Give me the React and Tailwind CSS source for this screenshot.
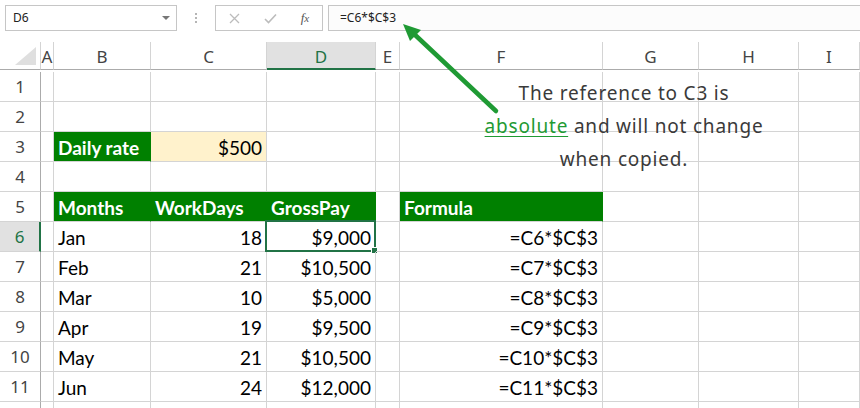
import React from 'react'

const COLS = ['A', 'B', 'C', 'D', 'E', 'F', 'G', 'H', 'I']

// one entry per row: cells keyed by column letter
const ROWS = [
  {},
  {},
  {
    B: { text: 'Daily rate', fill: 'green', bold: true },
    C: { text: '$500', fill: 'orange', right: true },
  },
  {},
  {
    B: { text: 'Months', fill: 'green', bold: true },
    C: { text: 'WorkDays', fill: 'green', bold: true },
    D: { text: 'GrossPay', fill: 'green', bold: true },
    F: { text: 'Formula', fill: 'green', bold: true },
  },
  { B: { text: 'Jan' }, C: { text: '18', right: true }, D: { text: '$9,000', right: true, selected: true }, F: { text: '=C6*$C$3', right: true } },
  { B: { text: 'Feb' }, C: { text: '21', right: true }, D: { text: '$10,500', right: true }, F: { text: '=C7*$C$3', right: true } },
  { B: { text: 'Mar' }, C: { text: '10', right: true }, D: { text: '$5,000', right: true }, F: { text: '=C8*$C$3', right: true } },
  { B: { text: 'Apr' }, C: { text: '19', right: true }, D: { text: '$9,500', right: true }, F: { text: '=C9*$C$3', right: true } },
  { B: { text: 'May' }, C: { text: '21', right: true }, D: { text: '$10,500', right: true }, F: { text: '=C10*$C$3', right: true } },
  { B: { text: 'Jun' }, C: { text: '24', right: true }, D: { text: '$12,000', right: true }, F: { text: '=C11*$C$3', right: true } },
  {},
]

function Cell({ cell }) {
  const c = cell || {}
  let cls = 'relative h-[30px] border-r border-b border-[#d4d4d4] px-[4px] pt-[2px] leading-[28px] whitespace-nowrap overflow-visible'
  if (c.fill === 'green') cls += ' bg-[#008000] border-r-[#008000] text-white'
  else if (c.fill === 'orange') cls += ' bg-[#fff2cc] text-black'
  else cls += ' text-black'
  if (c.bold) cls += ' font-bold'
  if (c.right) cls += ' text-right'
  return (
    <div className={cls}>
      {c.text}
      {c.selected && (
        <div className="absolute -left-[2px] -top-[2px] -right-[1px] -bottom-[1px] border-2 border-[#217346]">
          <div className="absolute -right-[4px] -bottom-[4px] w-[7px] h-[7px] bg-[#217346] border border-white" />
        </div>
      )}
    </div>
  )
}

export default function App() {
  return (
    <div className="relative w-[860px] h-[408px] overflow-hidden bg-white font-['Lato',sans-serif] text-[19px]">
      {/* Formula bar */}
      <div className="flex items-start h-[42px] pt-[5px] pl-[5px] font-['Noto_Sans',sans-serif]">
        <div className="flex items-center justify-between w-[172px] h-[26px] border border-[#c6c6c6] pl-[7px] pr-[6px] text-[12px] text-[#222]">
          <span>D6</span>
          <span className="w-0 h-0 border-l-[4px] border-r-[4px] border-t-[4px] border-l-transparent border-r-transparent border-t-[#777]" />
        </div>
        <div className="flex flex-col items-center justify-center gap-[2px] w-[38px] h-[26px]">
          <span className="w-[2px] h-[2px] bg-[#b5b5b5]" />
          <span className="w-[2px] h-[2px] bg-[#b5b5b5]" />
          <span className="w-[2px] h-[2px] bg-[#b5b5b5]" />
        </div>
        <div className="flex items-center w-[108px] h-[26px] border border-[#c6c6c6]">
          <div className="flex items-center justify-center w-[36px]">
            <svg width="11" height="11" viewBox="0 0 11 11">
              <path d="M1 1L10 10M10 1L1 10" stroke="#bcbcbc" strokeWidth="1.3" />
            </svg>
          </div>
          <div className="flex items-center justify-center w-[36px]">
            <svg width="13" height="11" viewBox="0 0 13 11">
              <path d="M1 6L4.5 9.5L12 1.5" stroke="#bcbcbc" strokeWidth="1.6" fill="none" />
            </svg>
          </div>
          <div className="flex items-center justify-center w-[34px] font-['Liberation_Serif',serif] italic text-[13px] text-[#555]">
            f<span className="text-[11px]">x</span>
          </div>
        </div>
        <div className="flex items-center flex-1 h-[26px] ml-[5px] border border-r-0 border-[#c6c6c6] bg-[#fcfcfc] pl-[11px] text-[12px] text-[#222]">
          =C6*$C$3
        </div>
      </div>

      {/* Sheet */}
      <div className="grid grid-cols-[41px_13px_97px_116px_109px_24px_203px_96px_100px_61px] auto-rows-[30px]">
        {/* header row */}
        <div className="relative h-[28px] border-r border-b border-r-[#d4d4d4] border-b-[#ababab]">
          <svg className="absolute right-[4px] bottom-[4px]" width="21" height="18" viewBox="0 0 21 18">
            <path d="M21 0L21 18L0 18Z" fill="#dfdfdf" />
          </svg>
        </div>
        {COLS.map((c) => (
          <div
            key={c}
            className={
              c === 'D'
                ? "h-[28px] bg-[#e1e1e1] border-r border-r-[#d4d4d4] border-b-2 border-b-[#217346] pt-[3px] text-center font-['Noto_Sans',sans-serif] text-[17px] leading-[24px] text-[#217346]"
                : "h-[28px] border-r border-r-[#d4d4d4] border-b border-b-[#ababab] pt-[3px] text-center font-['Noto_Sans',sans-serif] text-[17px] leading-[24px] text-[#444]"
            }
          >
            {c}
          </div>
        ))}

        {ROWS.map((row, i) => (
          <React.Fragment key={i}>
            <div
              className={
                i === 5
                  ? "h-[30px] bg-[#e1e1e1] border-r-2 border-r-[#217346] border-b border-b-[#d4d4d4] text-center font-['Noto_Sans',sans-serif] text-[17px] leading-[29px] text-[#217346]"
                  : "h-[30px] border-r border-r-[#ababab] border-b border-b-[#d4d4d4] text-center font-['Noto_Sans',sans-serif] text-[17px] leading-[29px] text-[#444]"
              }
            >
              {i < 11 ? i + 1 : ''}
            </div>
            {COLS.map((c) => (
              <Cell key={c} cell={row[c]} />
            ))}
          </React.Fragment>
        ))}
      </div>

      {/* Annotation */}
      <div className="absolute left-[464px] top-[77px] w-[320px] text-center font-['Noto_Sans',sans-serif] text-[19px] leading-[33px] tracking-[0.8px] text-[#3a3a3a]">
        <div>The reference to C3 is</div>
        <div>
          <span className="text-[#1f9a34] underline underline-offset-[3px]">absolute</span> and will not change
        </div>
        <div>when copied.</div>
      </div>

      <svg className="absolute left-0 top-0 pointer-events-none" width="860" height="408" viewBox="0 0 860 408">
        <line x1="496" y1="111" x2="413" y2="33" stroke="#1f9a34" strokeWidth="4.5" strokeLinecap="round" />
        <path d="M403 24L421 30L410 41Z" fill="#1f9a34" />
      </svg>
    </div>
  )
}
